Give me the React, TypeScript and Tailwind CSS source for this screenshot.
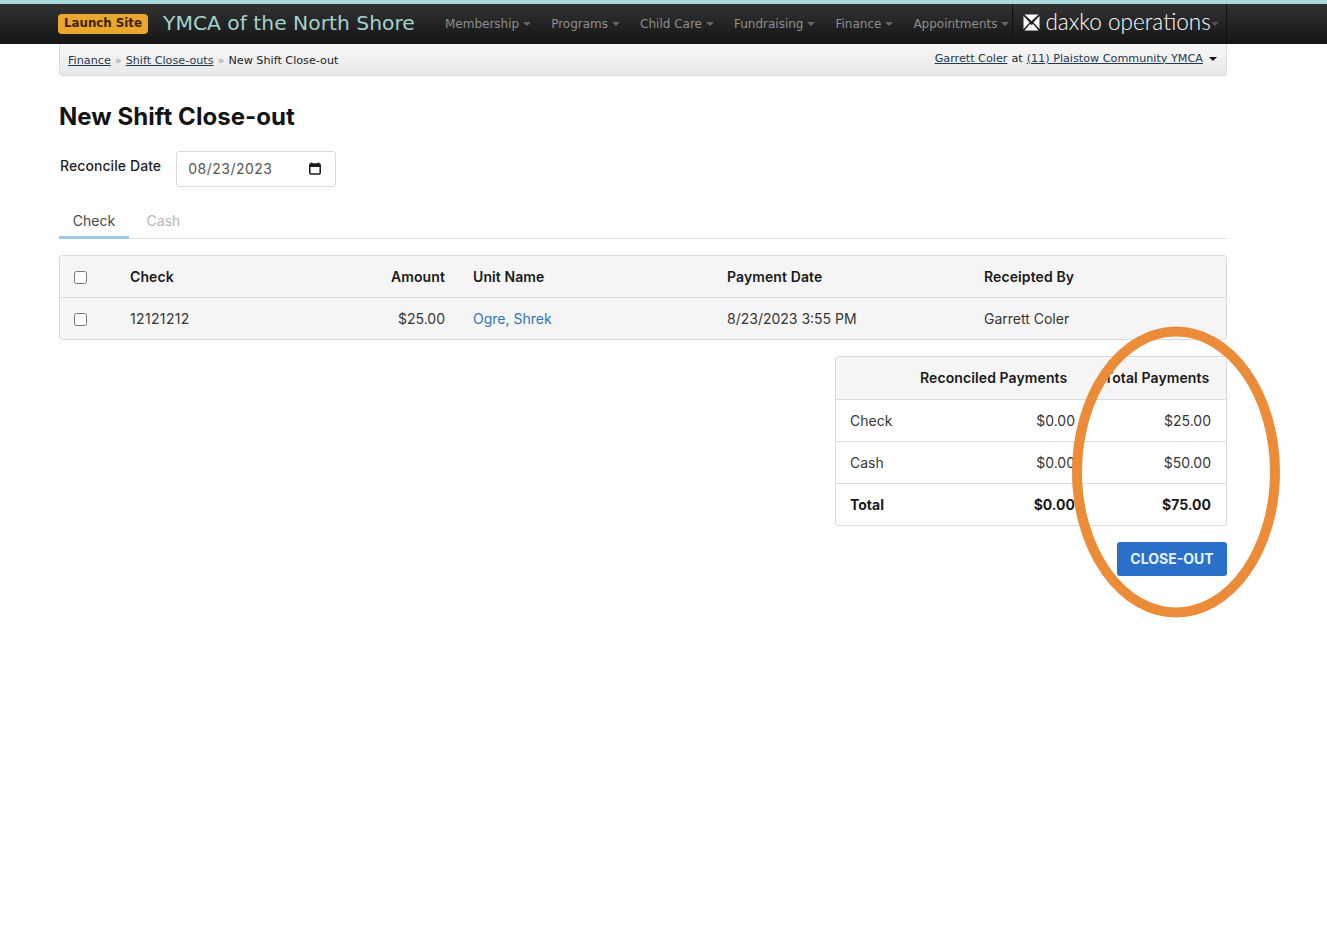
const NAV_ITEMS = ["Membership", "Programs", "Child Care", "Fundraising", "Finance", "Appointments"];

const SANS = "font-['Inter','Noto_Sans',sans-serif]";

function Caret({ className }: { className: string }) {
  return <span className={`inline-block h-0 w-0 border-x-[4px] border-t-[4px] border-x-transparent ${className}`} />;
}

function NavBar() {
  return (
    <div className="h-[40px] bg-gradient-to-b from-[#333333] to-[#151515] font-['DejaVu_Sans',sans-serif]">
      <div className="ml-[58px] flex h-full w-[1169px] items-center">
        <span className="flex h-[20px] w-[90px] items-center justify-center rounded-[4px] bg-[#eba62b] pb-[1px] text-[11.8px] font-bold leading-none text-[#3a2400]">
          Launch Site
        </span>
        <span className="ml-[15px] w-[282px] whitespace-nowrap pb-[2px] text-[20.3px] leading-none text-[#a3d3cf]">YMCA of the North Shore</span>
        <div className="flex items-center gap-[20px]">
          {NAV_ITEMS.map((item) => (
            <span key={item} className="flex items-center gap-[4px] whitespace-nowrap text-[12px] text-[#8f8f8f]">
              {item}
              <Caret className="border-t-[#666666]" />
            </span>
          ))}
        </div>
        <div className="ml-[3px] flex h-full flex-1 items-center border-x border-[#111111] pl-[10px]">
          <svg width="17" height="17" viewBox="0 0 17 17" className="mb-[3px] shrink-0">
            <path d="M1.5 0.5 H15.5 L8.5 7 Z M1.5 16.5 L7 10 L8.5 11 L10 10 L15.5 16.5 Z M0.5 2 L6.5 8.5 L0.5 15 Z M16.5 2 L10.5 8.5 L16.5 15 Z" fill="#ffffff" />
          </svg>
          <span className="ml-[5px] whitespace-nowrap pb-[4px] font-['Lato',sans-serif] text-[22.5px] font-light leading-none text-white">
            daxko operations
          </span>
          <Caret className="border-t-[#555555]" />
        </div>
      </div>
    </div>
  );
}

function Breadcrumbs() {
  return (
    <div className="ml-[59px] flex h-[32px] w-[1168px] justify-between rounded-b-[3px] border-x border-b border-[#dcdcdc] bg-gradient-to-b from-[#f7f7f7] to-[#e9e9e9] px-[8px] font-['DejaVu_Sans',sans-serif] text-[11.2px] text-[#222222]">
      <div className="flex items-center pt-[3px]">
        <a className="text-[#1f3a52] underline">Finance</a>
        <span className="mx-[4px] text-[#999999]">»</span>
        <a className="text-[#1f3a52] underline">Shift Close-outs</a>
        <span className="mx-[4px] text-[#999999]">»</span>
        <span>New Shift Close-out</span>
      </div>
      <div className="flex items-center pb-[1px] pr-[1px]">
        <a className="text-[#1f3a52] underline">Garrett Coler</a>
        <span className="mx-[4px]">at</span>
        <a className="text-[#1f3a52] underline">(11) Plaistow Community YMCA</a>
        <Caret className="ml-[6px] border-t-[#111111]" />
      </div>
    </div>
  );
}

function Checkbox() {
  return <input type="checkbox" className="mt-[2px] h-[13px] w-[13px]" />;
}

function ChecksTable() {
  const head = "text-[14px] font-semibold tracking-[0.1px] text-[#1a1a1a]";
  const cell = "text-[14px] text-[#363636]";
  return (
    <div className="mt-[16px] overflow-hidden rounded-[3px] border border-[#dbdbdb] bg-[#f5f5f5]">
      <div className="flex h-[42px] items-center border-b border-[#dbdbdb]">
        <div className="flex w-[70px] pl-[14px]"><Checkbox /></div>
        <div className={`w-[120px] ${head}`}>Check</div>
        <div className={`w-[195px] text-right ${head}`}>Amount</div>
        <div className={`ml-[28px] w-[254px] ${head}`}>Unit Name</div>
        <div className={`w-[257px] ${head}`}>Payment Date</div>
        <div className={head}>Receipted By</div>
      </div>
      <div className="flex h-[41px] items-center">
        <div className="flex w-[70px] pl-[14px]"><Checkbox /></div>
        <div className={`w-[120px] tracking-[0.35px] ${cell}`}>12121212</div>
        <div className={`w-[195px] text-right ${cell}`}>$25.00</div>
        <div className={`ml-[28px] w-[254px] text-[14px] text-[#3273c4]`}>Ogre, Shrek</div>
        <div className={`w-[257px] ${cell}`}>8/23/2023 3:55 PM</div>
        <div className={cell}>Garrett Coler</div>
      </div>
    </div>
  );
}

function SummaryRow({ label, reconciled, total, bold }: { label: string; reconciled: string; total: string; bold?: boolean }) {
  return (
    <div className={`flex h-[42px] items-center border-t border-[#dbdbdb] pl-[14px] pr-[15px] text-[14px] ${bold ? "font-bold text-[#1a1a1a]" : "text-[#363636]"}`}>
      <div className="flex-1">{label}</div>
      <div className="w-[120px] text-right">{reconciled}</div>
      <div className="w-[136px] text-right">{total}</div>
    </div>
  );
}

function SummaryTable() {
  return (
    <div className="mt-[16px] ml-auto w-[392px] overflow-hidden rounded-[3px] border border-[#dbdbdb] bg-white">
      <div className="flex h-[42px] items-center bg-[#f5f5f5] pb-[2px] text-[14px] font-semibold tracking-[0.1px] text-[#1a1a1a]">
        <div className="w-[232px] whitespace-nowrap pl-[84px]">Reconciled Payments</div>
        <div className="ml-[36px] whitespace-nowrap">Total Payments</div>
      </div>
      <SummaryRow label="Check" reconciled="$0.00" total="$25.00" />
      <SummaryRow label="Cash" reconciled="$0.00" total="$50.00" />
      <SummaryRow label="Total" reconciled="$0.00" total="$75.00" bold />
    </div>
  );
}

export default function App() {
  return (
    <div className="relative min-h-[931px] bg-white">
      <div className="h-[4px] bg-[#a6dcd9]" />
      <NavBar />
      <Breadcrumbs />
      <div className={`ml-[59px] w-[1168px] ${SANS}`}>
        <h1 className="mt-[25px] text-[24px] font-bold leading-[32px] tracking-[0.05px] text-[#141414]">New Shift Close-out</h1>
        <div className="mt-[18px] flex items-start">
          <label className="ml-[1px] mt-[5px] text-[14px] font-medium leading-[20px] tracking-[0.08px] text-[#1f1f1f]">Reconcile Date</label>
          <div className="ml-[15px] flex h-[36px] w-[160px] items-center justify-between rounded-[3px] border border-[#dbdbdb] pb-[1px] pl-[11px] pr-[14px] text-[14px] tracking-[0.5px] text-[#555555]">
            08/23/2023
            <svg width="12" height="13" viewBox="0 0 12 13">
              <path d="M2.5 0.5 V2 M9.5 0.5 V2" stroke="#1a1a1a" strokeWidth="1.4" />
              <rect x="0.8" y="2" width="10.4" height="10" rx="1" fill="none" stroke="#1a1a1a" strokeWidth="1.5" />
              <rect x="1" y="2" width="10" height="3" fill="#1a1a1a" />
            </svg>
          </div>
        </div>
        <div className="mt-[15px] flex h-[37px] border-b border-[#e5e5e5] text-[14px]">
          <div className="flex h-[37px] w-[70px] items-center justify-center border-b-[3px] border-[#9ccbea] pt-[3px] text-[#4a4a4a]">Check</div>
          <div className="flex h-[37px] w-[69px] items-center justify-center text-[#b5b5b5]">Cash</div>
        </div>
        <ChecksTable />
        <SummaryTable />
        <div className="mt-[16px] flex justify-end">
          <button className="h-[34px] w-[110px] rounded-[3px] bg-[#2a6fc9] pb-[1px] text-[14px] font-bold text-[#e6f4ff]">CLOSE-OUT</button>
        </div>
      </div>
      {/* hand-drawn annotation over the totals */}
      <svg className="pointer-events-none absolute left-[1066px] top-[322px]" width="220" height="300" viewBox="0 0 220 300">
        <ellipse cx="110" cy="150" rx="99" ry="140.5" fill="none" stroke="#ec8c38" strokeWidth="10" />
      </svg>
    </div>
  );
}
